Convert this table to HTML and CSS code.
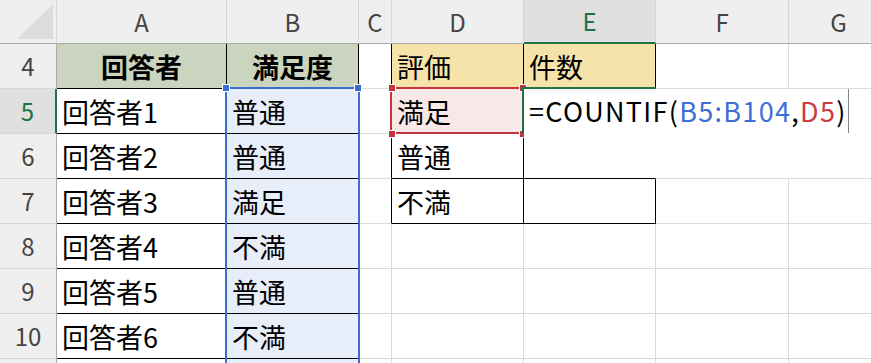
FILE: index.html
```html
<!DOCTYPE html>
<html lang="ja">
<head>
<meta charset="utf-8">
<title>COUNTIF</title>
<link rel="stylesheet" href="styles.css">
</head>
<body>
<div class="sheet">
  <div class="c ch corner"><svg class="tri" width="57" height="44" viewBox="0 0 57 44"><polygon points="17,39 53,39 53,4" fill="#dcdcdc"/></svg></div>
  <div class="c ch">A</div>
  <div class="c ch">B</div>
  <div class="c ch">C</div>
  <div class="c ch">D</div>
  <div class="c ch sel">E</div>
  <div class="c ch">F</div>
  <div class="c ch last">G</div>

  <div class="c rh">4</div>
  <div class="c tb thead">回答者</div>
  <div class="c tb thead">満足度</div>
  <div class="c rb"></div>
  <div class="c tb ylw">評価</div>
  <div class="c tb ylw">件数</div>
  <div class="c"></div>
  <div class="c"></div>

  <div class="c rh sel">5</div>
  <div class="c tb">回答者1</div>
  <div class="c tb blu">普通</div>
  <div class="c rb"></div>
  <div class="c tb pnk">満足</div>
  <div class="c"></div>
  <div class="c"></div>
  <div class="c"></div>

  <div class="c rh">6</div>
  <div class="c tb">回答者2</div>
  <div class="c tb blu">普通</div>
  <div class="c rb"></div>
  <div class="c tb">普通</div>
  <div class="c bb"></div>
  <div class="c"></div>
  <div class="c"></div>

  <div class="c rh">7</div>
  <div class="c tb">回答者3</div>
  <div class="c tb blu">満足</div>
  <div class="c rb"></div>
  <div class="c tb">不満</div>
  <div class="c tb"></div>
  <div class="c"></div>
  <div class="c"></div>

  <div class="c rh">8</div>
  <div class="c tb">回答者4</div>
  <div class="c tb blu">不満</div>
  <div class="c"></div>
  <div class="c"></div>
  <div class="c"></div>
  <div class="c"></div>
  <div class="c"></div>

  <div class="c rh">9</div>
  <div class="c tb">回答者5</div>
  <div class="c tb blu">普通</div>
  <div class="c"></div>
  <div class="c"></div>
  <div class="c"></div>
  <div class="c"></div>
  <div class="c"></div>

  <div class="c rh">10</div>
  <div class="c tb">回答者6</div>
  <div class="c tb blu">不満</div>
  <div class="c"></div>
  <div class="c"></div>
  <div class="c"></div>
  <div class="c"></div>
  <div class="c"></div>

  <div class="c rh"></div>
  <div class="c tb"></div>
  <div class="c tb blu"></div>
  <div class="c"></div>
  <div class="c"></div>
  <div class="c"></div>
  <div class="c"></div>
  <div class="c"></div>

  <!-- overlays: reference highlights and the in-cell editor -->
  <div class="ref ref-blue"></div>
  <div class="hd hd-blue hb1"></div>
  <div class="hd hd-blue hb2"></div>
  <div class="ref ref-red"></div>
  <div class="hd hd-red hr1"></div>
  <div class="hd hd-red hr2"></div>
  <div class="hd hd-red hr3"></div>
  <div class="hd hd-red hr4"></div>
  <div class="editor">
    <span class="k">=COUNTIF(</span><span class="rb-txt">B5:B104</span><span class="k">,</span><span class="rr-txt">D5</span><span class="k last-k">)</span><span class="caret"></span>
  </div>
  <div class="act act-top"></div>
  <div class="act act-left"></div>
</div>
</body>
</html>
```

FILE: styles.css
```css
html, body {
  margin: 0;
  padding: 0;
  background: #fff;
  overflow: hidden;
}

.sheet {
  position: relative;
  display: grid;
  grid-template-columns: 57px 170px 132px 33px 132px 132px 133px 100px;
  grid-template-rows: 44px repeat(8, 45px);
  width: 889px;
  font-family: "Noto Sans CJK JP", "Noto Sans", sans-serif;
}

.c {
  box-sizing: border-box;
  border-right: 1px solid #dadada;
  border-bottom: 1px solid #dadada;
  display: flex;
  align-items: center;
  padding-left: 5px;
  font-size: 27px;
  line-height: 1;
  color: #000;
  white-space: nowrap;
  overflow: hidden;
}

/* headers */
.ch {
  background: #efefef;
  border-right: 1px solid #d6d6d6;
  border-bottom: 1px solid #ababab;
  justify-content: center;
  padding: 0;
  font-size: 24px;
  color: #444;
}
.ch.corner {
  position: relative;
  padding: 0;
}
.tri {
  position: absolute;
  left: 0;
  top: 0;
}
.ch.sel {
  background: #e0e0e0;
  color: #1e7145;
  border-bottom: 2px solid #217346;
}
.rh {
  background: #efefef;
  border-right: 1px solid #ababab;
  border-bottom: 1px solid #d6d6d6;
  justify-content: center;
  padding: 0;
  font-size: 24px;
  color: #444;
}
.rh.sel {
  background: #e0e0e0;
  color: #1e7145;
  border-right: 2px solid #217346;
}

/* table borders */
.tb {
  border-right-color: #000;
  border-bottom-color: #000;
}
.rb {
  border-right-color: #000;
}
.bb {
  border-bottom-color: #000;
}

.thead {
  background: #cad4bf;
  font-weight: 700;
  justify-content: center;
  padding: 0;
}
.ylw {
  background: #f5e3aa;
}
.blu {
  background: #e8eef9;
}
.pnk {
  background: #f9e8e8;
}

/* reference highlight overlays */
.ref {
  position: absolute;
  box-sizing: border-box;
}
.ref-blue {
  left: 225px;
  top: 87px;
  width: 135px;
  height: 320px;
  border: 2px solid #3a6fcc;
  border-bottom: none;
}
.ref-red {
  left: 390px;
  top: 87px;
  width: 134px;
  height: 47px;
  border: 2px solid #c4353d;
}
.hd {
  position: absolute;
  width: 6px;
  height: 6px;
  border: 1px solid #fff;
}
.hd-blue { background: #3a6fcc; }
.hd-red { background: #c4353d; }
.hb1 { left: 222px; top: 84px; }
.hb2 { left: 354px; top: 84px; }
.hr1 { left: 388px; top: 84px; }
.hr2 { left: 519px; top: 84px; }
.hr3 { left: 388px; top: 130px; }
.hr4 { left: 519px; top: 130px; }

/* in-cell editor */
.editor {
  position: absolute;
  left: 524px;
  top: 89px;
  width: 347px;
  height: 89px;
  background: #fff;
  box-sizing: border-box;
  padding-left: 5px;
  display: flex;
  align-items: flex-start;
  font-size: 27px;
  line-height: 44px;
  letter-spacing: 1.3px;
  white-space: nowrap;
  color: #000;
}
.last-k { letter-spacing: 0; }
.rb-txt { color: #3f6fd6; }
.rr-txt { color: #cf3a43; }
.caret {
  display: inline-block;
  width: 1px;
  height: 44px;
  margin-left: 3px;
  background: #858585;
}

.act {
  position: absolute;
  background: #217346;
}
.act-top {
  left: 522px;
  top: 87px;
  width: 134px;
  height: 2px;
}
.act-left {
  left: 522px;
  top: 87px;
  width: 2px;
  height: 47px;
}
```
